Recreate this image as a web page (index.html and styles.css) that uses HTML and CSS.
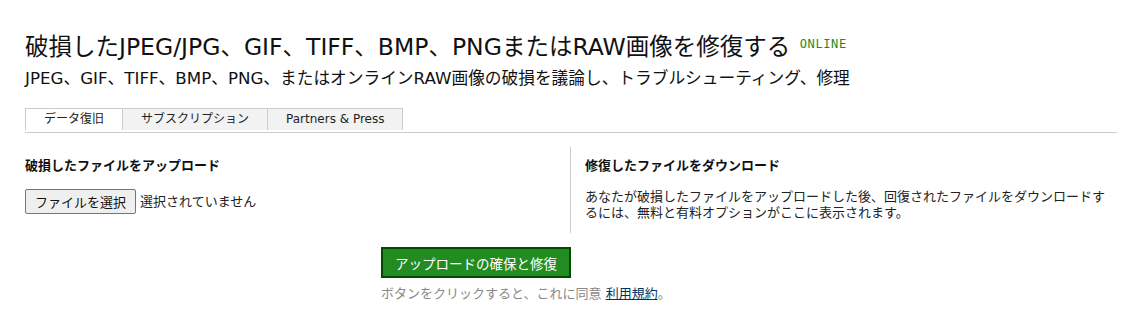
FILE: index.html
```html
<!DOCTYPE html>
<html lang="ja">
<head>
  <meta charset="UTF-8" />
  <title>破損したJPEG/JPG、GIF、TIFF、BMP、PNGまたはRAW画像を修復する</title>
  <link rel="stylesheet" href="styles.css">
</head>
<body>
  <div class="container">
    <h1 class="page-title">破損したJPEG/JPG、GIF、TIFF、BMP、PNGまたはRAW画像を修復する <span class="badge">ONLINE</span></h1>
    <p class="subtitle">JPEG、GIF、TIFF、BMP、PNG、またはオンラインRAW画像の破損を議論し、トラブルシューティング、修理</p>

    <div class="tabs">
      <a href="#" class="tab active">データ復旧</a>
      <a href="#" class="tab">サブスクリプション</a>
      <a href="#" class="tab">Partners &amp; Press</a>
    </div>

    <div class="columns">
      <div class="col col-upload">
        <h2>破損したファイルをアップロード</h2>
        <div class="file-row">
          <button class="file-btn">ファイルを選択</button>
          <span>選択されていません</span>
        </div>
      </div>
      <div class="col col-download">
        <h2>修復したファイルをダウンロード</h2>
        <p>あなたが破損したファイルをアップロードした後、回復されたファイルをダウンロードするには、無料と有料オプションがここに表示されます。</p>
      </div>
    </div>

    <div class="submit">
      <button class="submit-btn">アップロードの確保と修復</button>
      <p class="note">ボタンをクリックすると、これに同意 <a href="#">利用規約</a>。</p>
    </div>
  </div>
</body>
</html>
```

FILE: styles.css
```css
* {
  box-sizing: border-box;
  font-family: 'DejaVu Sans', 'Noto Sans CJK JP', sans-serif;
}

body {
  margin: 0;
  background: #fff;
  color: #222;
}

.container {
  padding: 0 5px 0 25px;
}

.page-title {
  margin: 0;
  padding-top: 33px;
  font-size: 23.5px;
  font-weight: normal;
  line-height: 28px;
  color: #111;
}

.badge {
  font-family: 'DejaVu Sans Mono', monospace;
  font-size: 12px;
  line-height: 1;
  letter-spacing: 0.6px;
  color: #1e8a1e;
  vertical-align: 7px;
  margin-left: 2px;
}

.subtitle {
  margin: 6px 0 0;
  font-size: 16.7px;
  line-height: 22px;
  color: #111;
}

.tabs {
  display: flex;
  margin-top: 19px;
  border-bottom: 1px solid #ccc;
  padding-bottom: 2px;
}

.tab {
  display: block;
  height: 22px;
  line-height: 21px;
  font-size: 12px;
  color: #222;
  text-decoration: none;
  border: 1px solid #ccc;
  border-bottom: none;
  background: #f2f2f2;
  padding: 0 18px;
}

.tab + .tab {
  border-left: none;
}

.tab.active {
  background: #fff;
}

.columns {
  display: flex;
  margin-top: 14px;
}

.col h2 {
  margin: 0 0 14px;
  font-size: 13px;
  font-weight: bold;
  line-height: 18px;
  color: #111;
}

.col-upload {
  width: 545px;
  padding-top: 10px;
}

.col-download {
  flex: 1;
  border-left: 1px solid #ccc;
  padding: 10px 0 12px 14px;
}

.col-download p {
  margin: 0;
  font-size: 13px;
  line-height: 16px;
  color: #222;
}

.file-row {
  display: flex;
  align-items: center;
  gap: 4px;
  font-size: 13px;
  line-height: 18px;
}

.file-btn {
  font-size: 13px;
  height: 25px;
  padding: 0 9px;
  border: 1px solid #767676;
  border-radius: 2px;
  background: #efefef;
  color: #111;
}

.submit {
  margin: 14px 0 0 356px;
}

.submit-btn {
  width: 190px;
  height: 31px;
  background: #228b22;
  border: 2px solid #004d00;
  color: #fff;
  font-size: 13.5px;
}

.note {
  margin: 7px 0 0;
  font-size: 13px;
  line-height: 18px;
  color: #888;
}

.note a {
  color: #003366;
}
```
